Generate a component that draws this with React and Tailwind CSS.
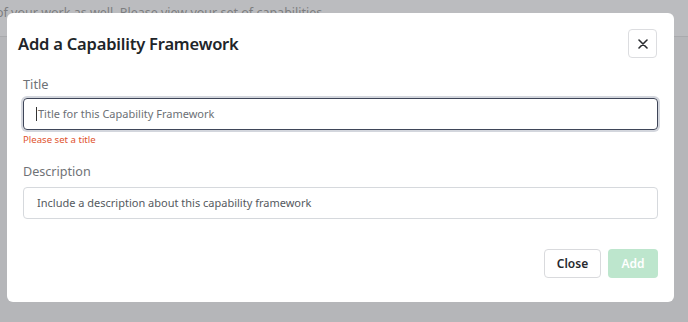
import React from "react";

export default function App() {
  const font = { fontFamily: '"Noto Sans", "Open Sans", sans-serif' };
  return (
    <div className="relative w-[688px] h-[322px] overflow-hidden bg-[#b5b6b9]" style={font}>
      <div className="h-[37px] bg-[#bbbcbf] border-b border-[#a9aaad] overflow-hidden">
        <div className="pt-[4px] text-[12.5px] leading-[18px] text-[#7d7e80] whitespace-nowrap -ml-[4px]">
          of your work as well. Please view your set of capabilities
        </div>
      </div>
      <div className="absolute left-[7px] top-[13px] w-[667px] h-[289px] bg-white rounded-[6px] flex flex-col">
        <div className="flex items-center justify-between pl-[11px] pr-[17px] pt-[16px]">
          <h2 className="text-[16.5px] leading-[24px] font-semibold text-[#212529] tracking-[-0.2px]">
            Add a Capability Framework
          </h2>
          <button className="w-[29px] h-[29px] flex items-center justify-center border border-[#dcdde0] rounded-[4px] bg-white">
            <svg width="10" height="10" viewBox="0 0 10 10" fill="none">
              <path d="M1 1L9 9M9 1L1 9" stroke="#2b2d31" strokeWidth="1.6" strokeLinecap="round" />
            </svg>
          </button>
        </div>
        <div className="px-[16px] pt-[16px] flex flex-col">
          <label className="text-[12.8px] leading-[20px] text-[#6f7276]">Title</label>
          <div className="mt-[4px] h-[32px] rounded-[4px] border-[1.5px] border-[#3f4659] ring-2 ring-[#d3d6dd] flex items-center pl-[12px]">
            <span className="w-[1px] h-[14px] bg-[#333] mr-[1px]"></span>
            <span className="text-[11px] text-[#6c7075] leading-[16px]">Title for this Capability Framework</span>
          </div>
          <div className="mt-[3px] text-[9.6px] leading-[14px] text-[#e0522e]">Please set a title</div>
          <label className="mt-[15px] text-[12.6px] leading-[20px] text-[#6f7276]">Description</label>
          <div className="mt-[5px] h-[32px] rounded-[4px] border border-[#d6d9dd] flex items-center pl-[13px]">
            <span className="text-[11px] text-[#55595e] leading-[16px]">Include a description about this capability framework</span>
          </div>
          <div className="mt-[30px] flex justify-end gap-[7px]">
            <button className="w-[57px] h-[29px] rounded-[4px] border border-[#d9dadd] bg-white text-[12px] font-semibold text-[#26292d]">
              Close
            </button>
            <button className="w-[50px] h-[29px] rounded-[4px] bg-[#bde6cd] text-[12px] font-semibold text-white">
              Add
            </button>
          </div>
        </div>
      </div>
    </div>
  );
}
